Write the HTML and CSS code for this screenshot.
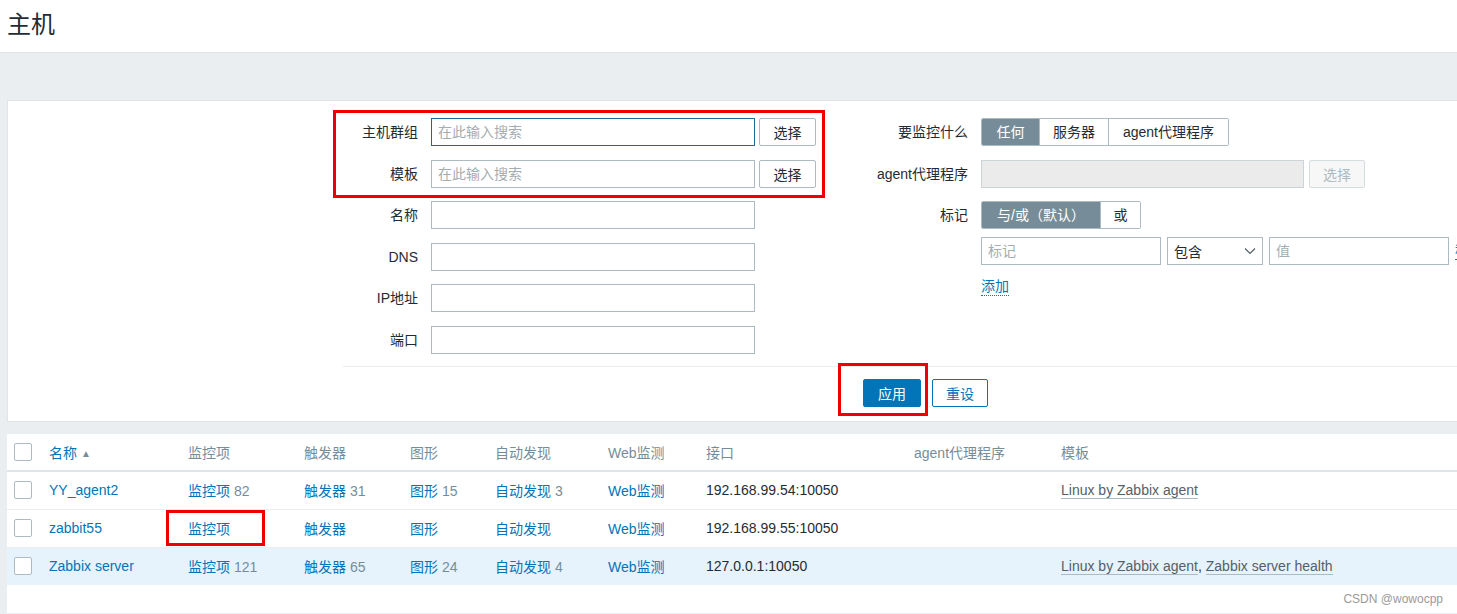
FILE: index.html
```html
<!DOCTYPE html>
<html lang="zh-CN">
<head>
<meta charset="utf-8">
<title>主机</title>
<link rel="stylesheet" href="styles.css">
</head>
<body>
<header class="page-header"><h1>主机</h1></header>
<main class="content">
  <section class="filter">
    <div class="filter-body">
      <div class="form-col form-left">
        <label class="lbl">主机群组</label>
        <div class="field"><input class="inp inp-wide inp-focus" placeholder="在此输入搜索"><button class="btn btn-grey">选择</button></div>
        <label class="lbl">模板</label>
        <div class="field"><input class="inp inp-wide" placeholder="在此输入搜索"><button class="btn btn-grey">选择</button></div>
        <label class="lbl">名称</label>
        <div class="field"><input class="inp inp-wide"></div>
        <label class="lbl">DNS</label>
        <div class="field"><input class="inp inp-wide"></div>
        <label class="lbl">IP地址</label>
        <div class="field"><input class="inp inp-wide"></div>
        <label class="lbl">端口</label>
        <div class="field"><input class="inp inp-wide"></div>
      </div>
      <div class="form-col form-right">
        <label class="lbl">要监控什么</label>
        <div class="field">
          <div class="seg">
            <span class="seg-item seg-active w58">任何</span>
            <span class="seg-item w69">服务器</span>
            <span class="seg-item w121">agent代理程序</span>
          </div>
        </div>
        <label class="lbl">agent代理程序</label>
        <div class="field"><input class="inp inp-disabled" disabled><button class="btn btn-disabled" disabled>选择</button></div>
        <label class="lbl lbl-top">标记</label>
        <div class="field-stack">
          <div class="seg">
            <span class="seg-item seg-active w119">与/或（默认）</span>
            <span class="seg-item w40">或</span>
          </div>
          <div class="tag-row">
            <input class="inp inp-tag" placeholder="标记">
            <div class="select">包含<svg class="chev" width="12" height="8" viewBox="0 0 12 8"><path d="M1 1.5 L6 6.5 L11 1.5" fill="none" stroke="#555f66" stroke-width="1.2"/></svg></div>
            <input class="inp inp-tag" placeholder="值">
            <a class="link-dotted">移除</a>
          </div>
          <a class="link-dotted add-link">添加</a>
        </div>
      </div>
    </div>
    <div class="filter-footer">
      <button class="btn btn-primary">应用</button>
      <button class="btn btn-alt">重设</button>
    </div>
  </section>

  <section class="list">
    <table class="hosts">
      <colgroup>
        <col class="c-cb"><col class="c-name"><col class="c-items"><col class="c-trig"><col class="c-graph"><col class="c-disc"><col class="c-web"><col class="c-if"><col class="c-proxy"><col class="c-tpl">
      </colgroup>
      <thead>
        <tr>
          <th class="cb-cell"><span class="cb"></span></th>
          <th><a class="link">名称</a> <span class="arrow">▲</span></th>
          <th>监控项</th>
          <th>触发器</th>
          <th>图形</th>
          <th>自动发现</th>
          <th>Web监测</th>
          <th>接口</th>
          <th>agent代理程序</th>
          <th>模板</th>
        </tr>
      </thead>
      <tbody>
        <tr>
          <td class="cb-cell"><span class="cb"></span></td>
          <td><a class="link">YY_agent2</a></td>
          <td><a class="link">监控项</a> <span class="num">82</span></td>
          <td><a class="link">触发器</a> <span class="num">31</span></td>
          <td><a class="link">图形</a> <span class="num">15</span></td>
          <td><a class="link">自动发现</a> <span class="num">3</span></td>
          <td><a class="link">Web监测</a></td>
          <td>192.168.99.54:10050</td>
          <td></td>
          <td><a class="tpl">Linux by Zabbix agent</a></td>
        </tr>
        <tr>
          <td class="cb-cell"><span class="cb"></span></td>
          <td><a class="link">zabbit55</a></td>
          <td><a class="link">监控项</a></td>
          <td><a class="link">触发器</a></td>
          <td><a class="link">图形</a></td>
          <td><a class="link">自动发现</a></td>
          <td><a class="link">Web监测</a></td>
          <td>192.168.99.55:10050</td>
          <td></td>
          <td></td>
        </tr>
        <tr class="row-hl">
          <td class="cb-cell"><span class="cb"></span></td>
          <td><a class="link">Zabbix server</a></td>
          <td><a class="link">监控项</a> <span class="num">121</span></td>
          <td><a class="link">触发器</a> <span class="num">65</span></td>
          <td><a class="link">图形</a> <span class="num">24</span></td>
          <td><a class="link">自动发现</a> <span class="num">4</span></td>
          <td><a class="link">Web监测</a></td>
          <td>127.0.0.1:10050</td>
          <td></td>
          <td><a class="tpl">Linux by Zabbix agent</a>, <a class="tpl">Zabbix server health</a></td>
        </tr>
      </tbody>
    </table>
  </section>
</main>

<div class="mark mark-filter"></div>
<div class="mark mark-apply"></div>
<div class="mark mark-items"></div>
<div class="watermark">CSDN @wowocpp</div>
</body>
</html>
```

FILE: styles.css
```css
* { box-sizing: border-box; }
html, body { margin: 0; padding: 0; }
body {
  width: 1457px;
  height: 614px;
  overflow: hidden;
  position: relative;
  background: #ebeef0;
  font-family: "Liberation Sans", "Noto Sans CJK SC", sans-serif;
  font-size: 14px;
  color: #1f2c33;
}

.page-header {
  height: 53px;
  background: #fff;
  border-bottom: 1px solid #dfe4e7;
}
.page-header h1 {
  margin: 0;
  padding-left: 7px;
  font-size: 24px;
  font-weight: normal;
  line-height: 50px;
  color: #1f2c33;
}

.content {
  padding: 47px 0 0 7px;
  width: 1700px;
}

.filter {
  background: #fff;
  border: 1px solid #dfe4e7;
  border-right: none;
}
.filter-body {
  display: flex;
  padding: 17px 0 0 335px;
}
.form-col {
  display: grid;
  column-gap: 13px;
  row-gap: 13.5px;
  align-content: start;
}
.form-left { grid-template-columns: 75px auto; width: 473px; }
.form-right { grid-template-columns: 152px auto; }

.lbl {
  text-align: right;
  line-height: 28px;
  height: 28px;
  white-space: nowrap;
}
.lbl-top { align-self: start; }

.field { display: flex; gap: 4px; height: 28px; }
.field-stack { display: flex; flex-direction: column; align-items: flex-start; }

.inp {
  height: 28px;
  border: 1px solid #acbbc2;
  border-radius: 0;
  padding: 0 6px;
  font: inherit;
  color: #1f2c33;
  background: #fff;
  outline: none;
}
.inp::placeholder { color: #a3adb2; }
.inp-wide { width: 324px; }
.inp-focus { border-color: #1b6a9b; }
.inp-disabled { width: 323px; background: #ebebeb; border-color: #ccd4d8; }
.inp-tag { width: 180px; }

.btn {
  height: 28px;
  font: inherit;
  border-radius: 2px;
  padding: 0;
  cursor: pointer;
}
.btn-grey { width: 57px; background: #fff; border: 1px solid #acbbc2; color: #1f2c33; }
.btn-disabled { width: 56px; margin-left: 1px; background: #f7f7f7; border: 1px solid #d5dde1; color: #acbbc2; }
.btn-primary { width: 58px; background: #0275b8; border: 1px solid #0275b8; color: #fff; }
.btn-alt { width: 56px; margin-left: 11px; background: #fff; border: 1px solid #0275b8; color: #0275b8; }

.seg {
  display: flex;
  height: 28px;
  border: 1px solid #acbbc2;
  border-radius: 2px;
  overflow: hidden;
}
.seg-item {
  line-height: 26px;
  text-align: center;
  background: #fff;
  color: #1f2c33;
  border-left: 1px solid #acbbc2;
  white-space: nowrap;
}
.seg-item:first-child { border-left: none; }
.seg-active { background: #768d99; color: #fff; }
.w58 { width: 57px; }
.w69 { width: 69px; }
.w121 { width: 120px; }
.w119 { width: 118px; }
.w40 { width: 40px; }

.tag-row {
  display: flex;
  gap: 6px;
  margin-top: 8px;
  height: 28px;
  align-items: center;
}
.select {
  width: 96px;
  height: 28px;
  border: 1px solid #acbbc2;
  padding: 0 6px;
  display: flex;
  align-items: center;
  justify-content: space-between;
  background: #fff;
}
.chev { display: block; }

.link-dotted {
  color: #0275b8;
  border-bottom: 1px dotted #0275b8;
  line-height: 17px;
  white-space: nowrap;
}
.add-link { margin-top: 13px; }

.filter-footer {
  margin: 12.5px 0 0 335px;
  border-top: 1px solid #ebeef0;
  padding: 12px 0 14px 520px;
  display: flex;
}

.list {
  margin-top: 12px;
  background: #fff;
  padding-bottom: 28px;
}
.hosts {
  table-layout: fixed;
  width: 1554px;
  border-collapse: collapse;
}
.c-cb { width: 42px; }
.c-name { width: 139px; }
.c-items { width: 116px; }
.c-trig { width: 106px; }
.c-graph { width: 85px; }
.c-disc { width: 113px; }
.c-web { width: 98px; }
.c-if { width: 208px; }
.c-proxy { width: 147px; }
.c-tpl { width: 500px; }

.hosts th, .hosts td {
  padding: 0;
  text-align: left;
  vertical-align: middle;
  white-space: nowrap;
}
.hosts th {
  height: 37px;
  font-weight: normal;
  color: #768d99;
  border-bottom: 2px solid #dfe4e7;
}
.hosts td {
  height: 38px;
  border-bottom: 1px solid #ebeef0;
}
.hosts tbody tr:last-child td { border-bottom: none; }
.row-hl td { background: #e6f2fc; }
.cb-cell { padding-left: 7px !important; }
.cb {
  display: block;
  width: 18px;
  height: 18px;
  border: 1px solid #acbbc2;
  border-radius: 2px;
  background: #fff;
}
.link { color: #0275b8; text-decoration: none; }
.arrow { font-size: 10px; color: #768d99; position: relative; top: -1px; }
.num { color: #768d99; }
.tpl {
  color: #555f66;
  border-bottom: 1px solid #acbbc2;
}

.mark {
  position: absolute;
  border: 3px solid #ee0000;
  pointer-events: none;
}
.mark-filter { left: 333px; top: 110px; width: 492px; height: 88px; }
.mark-apply { left: 838px; top: 363px; width: 90px; height: 53px; }
.mark-items { left: 166px; top: 510px; width: 99px; height: 36px; }

.watermark {
  position: absolute;
  right: 14px;
  bottom: 8px;
  font-size: 12px;
  color: #9a9a9a;
}
```
